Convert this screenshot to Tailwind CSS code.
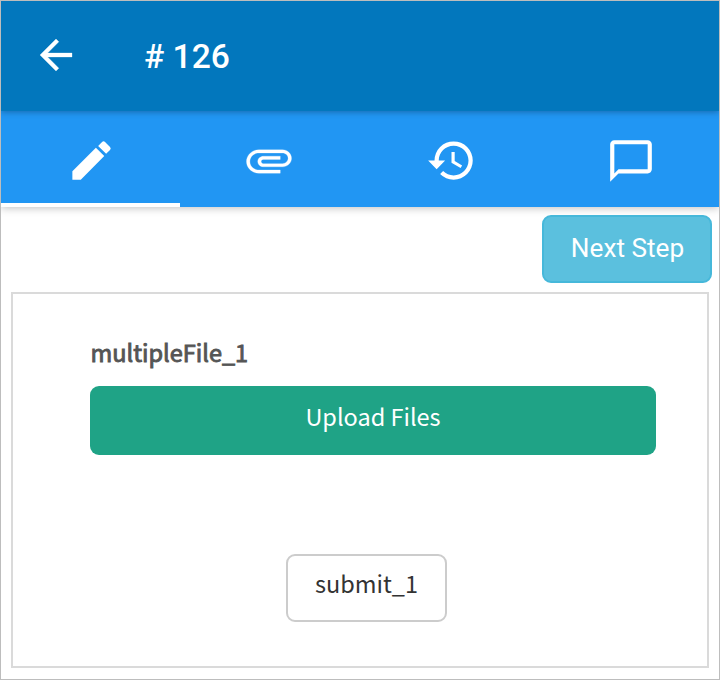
<!DOCTYPE html>
<html lang="en">
<head>
<meta charset="utf-8">
<title># 126</title>
<script src="https://cdn.jsdelivr.net/npm/@tailwindcss/browser@4"></script>
</head>
<body class="bg-white">
<div class="flex h-[680px] w-[720px] flex-col overflow-hidden border border-[#bdbdbd] bg-white font-[Roboto,sans-serif]">
  <header class="z-20 flex h-[110px] shrink-0 items-center bg-[#0277bd] pl-[31px] text-white shadow-[0_1px_6px_rgba(0,0,0,0.3)]">
    <svg class="mb-0.5 size-12 shrink-0" viewBox="0 0 24 24" fill="currentColor" stroke="currentColor" stroke-width=".15"><path d="M20 11H7.83l5.59-5.59L12 4l-8 8 8 8 1.41-1.41L7.83 13H20v-2z"/></svg>
    <h1 class="mt-0.5 ml-[64px] text-[33.6px] leading-10 font-medium"># 126</h1>
  </header>
  <nav class="z-10 grid h-24 shrink-0 grid-cols-[179px_180px_180px_179px] bg-[#2196f3] text-white shadow-[0_1px_8px_rgba(0,0,0,0.25)]">
    <div class="flex items-center justify-center border-b-4 border-white pt-[7px] pl-px">
      <svg class="size-[51px]" viewBox="0 0 24 24" fill="currentColor"><path d="M3 17.05V21h3.95L18 9.94l-3.94-3.94L3 17.05zM20.71 7.04a1 1 0 0 0 0-1.41l-2.34-2.34a1 1 0 0 0-1.41 0l-1.83 1.83 3.75 3.75 1.83-1.83z"/></svg>
    </div>
    <div class="flex items-center justify-center pt-1 pr-[3px]">
      <svg class="h-[51px] w-[54px]" viewBox="0 .5 24 24" preserveAspectRatio="none" fill="currentColor" stroke="currentColor" stroke-width=".12"><path d="M7.5 18C4.46 18 2 15.54 2 12.5S4.46 7 7.5 7H18c2.21 0 4 1.79 4 4s-1.79 4-4 4H9.5C8.12 15 7 13.88 7 12.5S8.12 10 9.5 10H17v1.5H9.5c-.55 0-1 .45-1 1s.45 1 1 1H18c1.38 0 2.5-1.12 2.5-2.5S19.38 8.5 18 8.5H7.5c-2.21 0-4 1.79-4 4s1.79 4 4 4H17V18H7.5z"/></svg>
    </div>
    <div class="flex items-center justify-center pt-[3px] pl-0.5">
      <svg class="size-[51px]" viewBox="0 0 24 24" fill="currentColor"><path d="M13 3a9 9 0 0 0-9 9H1l4 4.1L9 12H6c0-3.87 3.13-7 7-7s7 3.13 7 7-3.13 7-7 7c-1.93 0-3.68-.79-4.94-2.06l-1.42 1.42A8.95 8.95 0 0 0 13 21a9 9 0 0 0 0-18zm-1 5v5l4.28 2.54.72-1.21-3.5-2.08V8H12z"/></svg>
    </div>
    <div class="flex items-center justify-center pt-1 pl-[3px]">
      <svg class="size-[50px]" viewBox="0 0 24 24" fill="currentColor"><path d="M20 2H4c-1.1 0-2 .9-2 2v18l4-4h14c1.1 0 2-.9 2-2V4c0-1.1-.9-2-2-2zm0 14H6l-2 2V4h16v12z"/></svg>
    </div>
  </nav>
  <main class="flex flex-1 flex-col">
    <div class="z-20 flex h-[85px] justify-end pt-[8px] pr-[7px]">
      <button class="h-[68px] w-[170px] rounded-[9px] border-2 border-[#46b8da] bg-[#5bc0de] pb-px pl-px text-[26.2px] text-white">Next Step</button>
    </div>
    <section class="mr-[10px] ml-[10px] flex h-[376px] flex-col border-2 border-[#dadada] pt-[38px] pr-[51px] pl-[77px] font-['Noto_Sans_CJK_SC',sans-serif]">
      <div class="h-[54px] pl-[0.5px] text-[23.5px] leading-10 text-[#555] [-webkit-text-stroke:0.9px_#555]">multipleFile_1</div>
      <button class="h-[69px] shrink-0 rounded-[9px] bg-[#1fa386] pb-[8px] text-[23.5px] text-white">Upload Files</button>
      <button class="mt-[99px] ml-[196px] h-[68px] w-[161px] shrink-0 rounded-[9px] border-2 border-[#ccc] bg-white pb-[8px] text-[23.5px] text-[#333]">submit_1</button>
    </section>
  </main>
</div>
</body>
</html>
